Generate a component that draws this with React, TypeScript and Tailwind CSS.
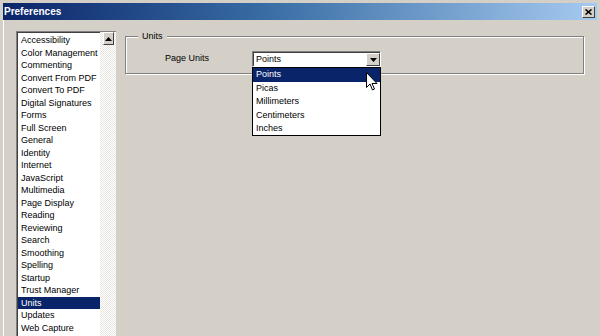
import React from "react";

const categories = [
  "Accessibility",
  "Color Management",
  "Commenting",
  "Convert From PDF",
  "Convert To PDF",
  "Digital Signatures",
  "Forms",
  "Full Screen",
  "General",
  "Identity",
  "Internet",
  "JavaScript",
  "Multimedia",
  "Page Display",
  "Reading",
  "Reviewing",
  "Search",
  "Smoothing",
  "Spelling",
  "Startup",
  "Trust Manager",
  "Units",
  "Updates",
  "Web Capture",
];

const units = ["Points", "Picas", "Millimeters", "Centimeters", "Inches"];

function Triangle({ up }: { up?: boolean }) {
  return (
    <svg width="7" height="4" viewBox="0 0 7 4">
      <path d={up ? "M3.5 0 L7 4 L0 4 Z" : "M0 0 L7 0 L3.5 4 Z"} fill="#000" />
    </svg>
  );
}

function App() {
  return (
    <div className="w-[600px] h-[336px] overflow-hidden bg-[#d4d0c8] font-['Liberation_Sans',Arial,sans-serif] text-[9px] text-black border-l-[3px] border-t-[3px] border-r-[3px] border-[#d4d0c8] shadow-[inset_1px_1px_0_#fff]">
      {/* title bar */}
      <div className="h-[17px] flex items-center justify-between pl-[1px] pr-[2px] bg-[linear-gradient(to_right,#0a246a,#3a6ea5_45%,#a6caf0)]">
        <span className="text-white font-bold text-[10px] leading-none">Preferences</span>
        <div className="w-[13px] h-[12px] bg-[#d4d0c8] border border-t-white border-l-white border-r-[#404040] border-b-[#404040] flex items-center justify-center">
          <svg width="7" height="6" viewBox="0 0 7 6">
            <path d="M0.5 0.5 L6.5 5.5 M6.5 0.5 L0.5 5.5" stroke="#000" strokeWidth="1.6" />
          </svg>
        </div>
      </div>

      <div className="flex pl-[13px] pt-[11px] gap-[9px]">
        {/* category list */}
        <div className="w-[100px] h-[320px] flex border-t border-l border-[#808080] bg-white">
          <div className="flex-1 border-t border-l border-[#404040] pt-[1px]">
            {categories.map((c) => (
              <div
                key={c}
                className={
                  "h-[12.5px] leading-[12.5px] pl-[3px] whitespace-nowrap " +
                  (c === "Units" ? "bg-[#0a246a] text-white" : "")
                }
              >
                {c}
              </div>
            ))}
          </div>
          <div className="w-[16px] bg-[conic-gradient(#ffffff_25%,#e9e7e2_0_50%,#ffffff_0_75%,#e9e7e2_0)] bg-[length:2px_2px] pl-[3px] pr-[2px]">
            <div className="h-[13px] bg-[#d4d0c8] border border-t-white border-l-white border-r-[#404040] border-b-[#404040] flex items-center justify-center">
              <Triangle up />
            </div>
          </div>
        </div>

        {/* right panel */}
        <div className="w-[459px] pt-[5px]">
          <div className="relative h-[38px] border border-[#808080] shadow-[1px_1px_0_#fff,inset_1px_1px_0_#fff]">
            <span className="absolute left-[12px] top-[-7px] px-[4px] bg-[#d4d0c8] leading-[12px]">Units</span>
            <div className="flex items-center pt-[14px] pl-[39px]">
              <span className="w-[87px]">Page Units</span>
              <div className="relative">
                <div className="w-[129px] h-[16px] bg-white border border-t-[#808080] border-l-[#808080] border-r-white border-b-white flex">
                  <div className="flex-1 border-t border-l border-[#404040] pl-[2px] leading-[13px]">Points</div>
                  <div className="w-[14px] border-t border-[#404040] bg-white">
                    <div className="h-[13px] bg-[#d4d0c8] border border-t-white border-l-white border-r-[#404040] border-b-[#404040] flex items-center justify-center">
                      <Triangle />
                    </div>
                  </div>
                </div>
                {/* open dropdown */}
                <div className="absolute left-0 top-[16px] w-[129px] h-[69px] bg-white border border-black z-10">
                  {units.map((u) => (
                    <div
                      key={u}
                      className={
                        "h-[13.5px] leading-[13.5px] pl-[3px] " +
                        (u === "Points" ? "bg-[#0a246a] text-white" : "")
                      }
                    >
                      {u}
                    </div>
                  ))}
                </div>
                {/* mouse cursor */}
                <svg
                  className="absolute left-[114px] top-[21px] z-20"
                  width="12"
                  height="19"
                  viewBox="0 0 12 19"
                >
                  <path
                    d="M0.5 0.5 L0.5 15.5 L4 12 L6.5 18 L8.5 17 L6 11.5 L11 11.5 Z"
                    fill="#fff"
                    stroke="#000"
                    strokeWidth="1"
                    strokeLinejoin="miter"
                  />
                </svg>
              </div>
            </div>
          </div>
        </div>
      </div>
    </div>
  );
}

export default App;
